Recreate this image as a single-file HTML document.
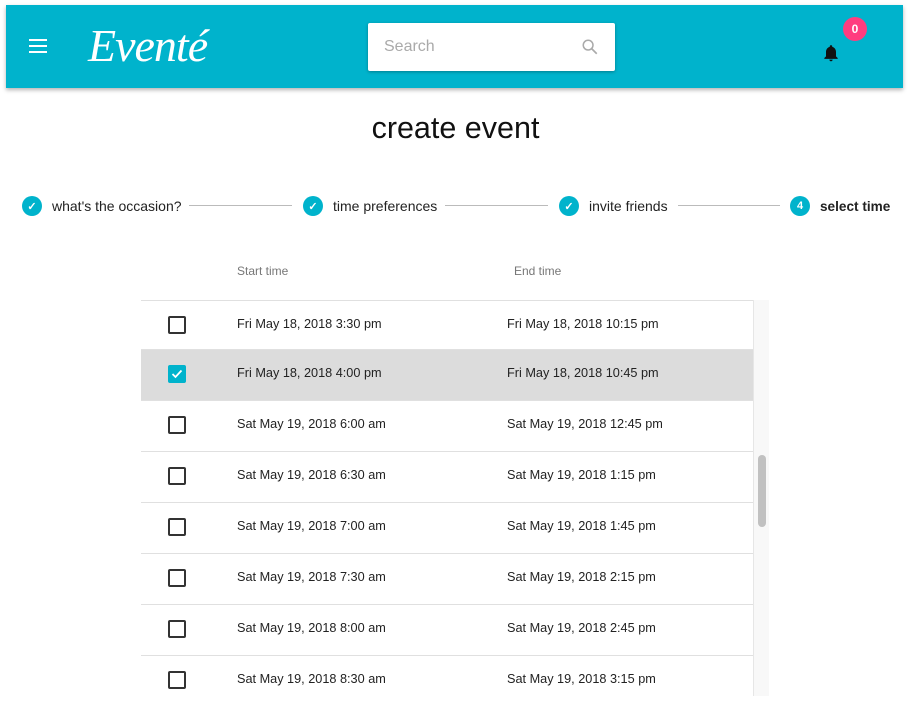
<!DOCTYPE html>
<html><head><style>
body{margin:0;width:911px;height:696px;overflow:hidden;background:#fff;font-family:"Liberation Sans",Arial,sans-serif;position:relative}
.hdr{position:absolute;left:6px;top:5px;width:897px;height:83px;background:#00b3cc;box-shadow:0 2px 4px rgba(0,0,0,.3)}
.ham{position:absolute;left:23px;top:34px;width:18px}
.ham i{display:block;height:2px;background:#fff;margin-bottom:4px}
.logo{position:absolute;left:82px;top:14px;color:#fff;font-family:"Liberation Serif",serif;font-style:italic;font-size:46px;letter-spacing:-1px}
.search{position:absolute;left:362px;top:18px;width:247px;height:48px;background:#fff;border-radius:2px;box-shadow:0 1px 3px rgba(0,0,0,.3)}
.search span{position:absolute;left:16px;top:15px;color:#aaa;font-size:16px}
.badge{position:absolute;left:843px;top:17px;width:24px;height:24px;border-radius:50%;background:#ff3d7f;color:#fff;font-size:12px;font-weight:bold;text-align:center;line-height:24px}
h1{position:absolute;top:111px;left:0;width:911px;text-align:center;font-weight:normal;font-size:30.5px;margin:0;color:#111}
.step{position:absolute;top:196px;font-size:14px;color:#222;display:flex;align-items:center}
.c{width:20px;height:20px;border-radius:50%;background:#00b3cc;margin-right:10px;display:flex;align-items:center;justify-content:center;color:#fff;font-size:11px;font-weight:bold}
.line{position:absolute;top:205px;height:1px;background:#bbb}
.th{position:absolute;top:264px;font-size:12px;color:#777}
.row{position:absolute;left:141px;width:612px;height:50px;border-top:1px solid #e0e0e0;font-size:12.7px;color:#222}
.row.sel{background:#dcdcdc}
.row .cb{position:absolute;left:27px;top:15px;width:14px;height:14px;border:2px solid #333;border-radius:2px}
.row.sel .cb{background:#00b3cc;border-color:#00b3cc}
.row .s{position:absolute;left:96px;top:16px}
.row .e{position:absolute;left:366px;top:16px}
.sb{position:absolute;left:753px;top:300px;width:15px;height:396px;background:#f8f8f8;border-left:1px solid #e6e6e6}
.th2{position:absolute;left:758px;top:455px;width:8px;height:72px;background:#c1c1c1;border-radius:4px}
</style></head><body>
<div class="hdr">
<div class="ham"><i></i><i></i><i></i></div>
<div class="logo">Eventé</div>
<div class="search"><span>Search</span>
<svg style="position:absolute;left:213px;top:15px" width="18" height="18" viewBox="0 0 24 24"><circle cx="9.5" cy="9.5" r="6.5" fill="none" stroke="#aaa" stroke-width="2"/><path d="M14 14l7 7" stroke="#aaa" stroke-width="2.2"/></svg></div>
<svg style="position:absolute;left:815px;top:37px" width="20" height="22" viewBox="0 0 24 24"><path d="M12 22c1.1 0 2-.9 2-2h-4c0 1.1.9 2 2 2zm6-6v-5c0-3.1-1.6-5.6-4.5-6.3V4c0-.8-.7-1.5-1.5-1.5s-1.5.7-1.5 1.5v.7C7.6 5.4 6 7.9 6 11v5l-2 2v1h16v-1l-2-2z" fill="#111"/></svg>
</div>
<div class="badge">0</div>
<h1>create event</h1>
<div class="step" style="left:22px"><div class="c">✓</div>what's the occasion?</div>
<div class="line" style="left:189px;width:103px"></div>
<div class="step" style="left:303px"><div class="c">✓</div>time preferences</div>
<div class="line" style="left:445px;width:103px"></div>
<div class="step" style="left:559px"><div class="c">✓</div>invite friends</div>
<div class="line" style="left:678px;width:102px"></div>
<div class="step" style="left:790px;font-weight:bold;font-size:13.6px"><div class="c">4</div>select time</div>
<div class="th" style="left:237px">Start time</div>
<div class="th" style="left:514px">End time</div>
<div class="row" style="top:300px"><div class="cb"></div><div class="s">Fri May 18, 2018 3:30 pm</div><div class="e">Fri May 18, 2018 10:15 pm</div></div>
<div class="row sel" style="top:349px"><div class="cb"><svg width="14" height="14" viewBox="0 0 14 14" style="display:block"><path d="M2.5 7l3 3 6-6.5" stroke="#fff" stroke-width="1.8" fill="none"/></svg></div><div class="s">Fri May 18, 2018 4:00 pm</div><div class="e">Fri May 18, 2018 10:45 pm</div></div>
<div class="row" style="top:400px"><div class="cb"></div><div class="s">Sat May 19, 2018 6:00 am</div><div class="e">Sat May 19, 2018 12:45 pm</div></div>
<div class="row" style="top:451px"><div class="cb"></div><div class="s">Sat May 19, 2018 6:30 am</div><div class="e">Sat May 19, 2018 1:15 pm</div></div>
<div class="row" style="top:502px"><div class="cb"></div><div class="s">Sat May 19, 2018 7:00 am</div><div class="e">Sat May 19, 2018 1:45 pm</div></div>
<div class="row" style="top:553px"><div class="cb"></div><div class="s">Sat May 19, 2018 7:30 am</div><div class="e">Sat May 19, 2018 2:15 pm</div></div>
<div class="row" style="top:604px"><div class="cb"></div><div class="s">Sat May 19, 2018 8:00 am</div><div class="e">Sat May 19, 2018 2:45 pm</div></div>
<div class="row" style="top:655px"><div class="cb"></div><div class="s">Sat May 19, 2018 8:30 am</div><div class="e">Sat May 19, 2018 3:15 pm</div></div>
<div class="sb"></div><div class="th2"></div>
</body></html>
